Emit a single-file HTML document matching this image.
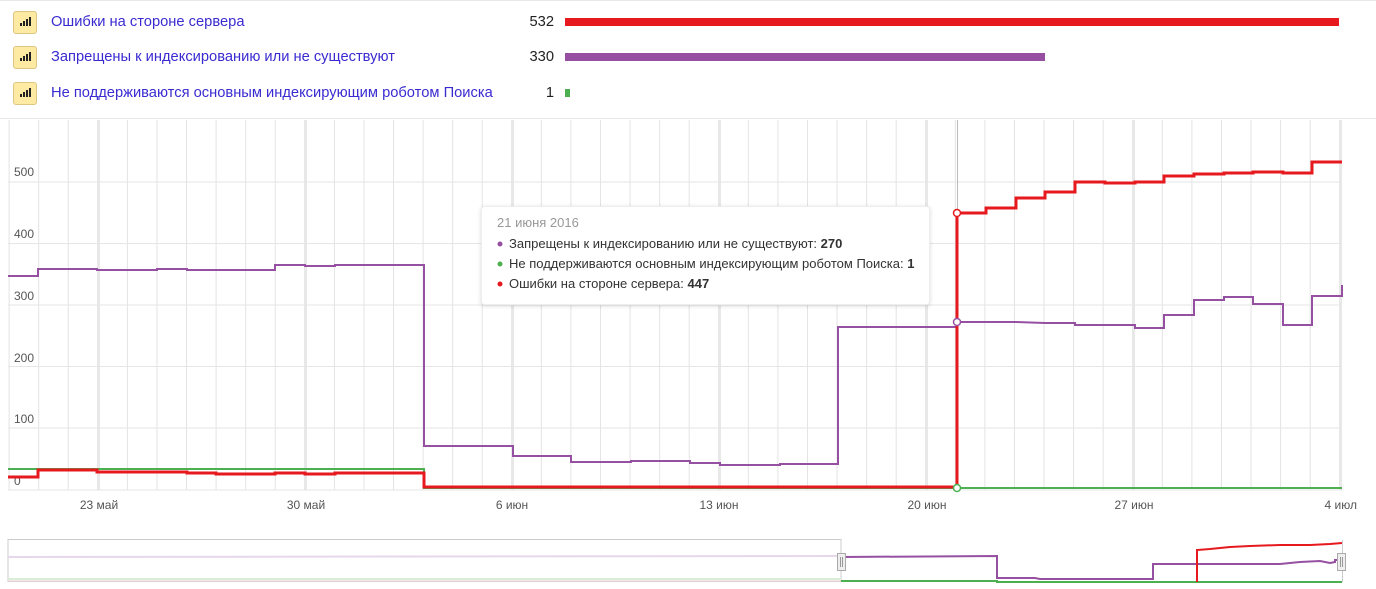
<!DOCTYPE html>
<html><head><meta charset="utf-8"><style>
body{margin:0;width:1376px;height:589px;background:#fff;font-family:"Liberation Sans",Arial,sans-serif;overflow:hidden;position:relative}
.top{position:absolute;left:0;top:0;width:1376px;height:1px;background:#e8e8e8}
.row{position:absolute;left:0;height:24px;width:1376px}
.ic{position:absolute;left:13px;top:0;width:24px;height:23px;background:#feeaa3;border:1px solid #dcc682;border-radius:3px;box-sizing:border-box}
.ic i{position:absolute;bottom:7px;width:2px;background:#222}
.lbl{position:absolute;left:51px;top:3px;font-size:14.7px;color:#3a2bd1}
.num{position:absolute;right:822px;top:3px;font-size:14.7px;color:#222}
.bar{position:absolute;left:565px;top:7px;height:8px}
.sep{position:absolute;left:0;top:118px;width:1376px;height:1px;background:#e6e6e6}
</style></head><body>
<div class="top"></div>
<div class="row" style="top:11px"><div class="ic"><i style="left:6px;height:3px"></i><i style="left:9px;height:5px"></i><i style="left:12px;height:7px"></i><i style="left:15px;height:9px"></i></div><div class="lbl">Ошибки на стороне сервера</div><div class="num">532</div><div class="bar" style="width:774px;background:#e5191e"></div></div>
<div class="row" style="top:46px"><div class="ic"><i style="left:6px;height:3px"></i><i style="left:9px;height:5px"></i><i style="left:12px;height:7px"></i><i style="left:15px;height:9px"></i></div><div class="lbl">Запрещены к индексированию или не существуют</div><div class="num">330</div><div class="bar" style="width:480px;background:#9650a1"></div></div>
<div class="row" style="top:82px"><div class="ic"><i style="left:6px;height:3px"></i><i style="left:9px;height:5px"></i><i style="left:12px;height:7px"></i><i style="left:15px;height:9px"></i></div><div class="lbl">Не поддерживаются основным индексирующим роботом Поиска</div><div class="num">1</div><div class="bar" style="width:5px;background:#4caf50"></div></div>
<div class="sep"></div>
<svg width="1376" height="589" style="position:absolute;left:0;top:0" font-family="Liberation Sans, Arial, sans-serif">
<defs><pattern id="vg" x="8.6" y="0" width="29.57" height="10" patternUnits="userSpaceOnUse"><rect x="0" y="0" width="1" height="10" fill="#e3e3e3"/></pattern></defs>
<rect x="8" y="120" width="1334" height="370" fill="url(#vg)"/>
<g fill="#e8e8e8"><rect x="97" y="120" width="3" height="370"/><rect x="304" y="120" width="3" height="370"/><rect x="511" y="120" width="3" height="370"/><rect x="718" y="120" width="3" height="370"/><rect x="925" y="120" width="3" height="370"/><rect x="1132" y="120" width="3" height="370"/><rect x="1339" y="120" width="3" height="370"/></g>
<g stroke="#e6e6e6" stroke-width="1"><line x1="8" x2="1342" y1="182" y2="182"/><line x1="8" x2="1342" y1="243.5" y2="243.5"/><line x1="8" x2="1342" y1="305" y2="305"/><line x1="8" x2="1342" y1="366.5" y2="366.5"/><line x1="8" x2="1342" y1="428" y2="428"/><line x1="8" x2="1342" y1="490" y2="490"/></g>
<g font-size="12" fill="#555"><text x="14" y="176">500</text><text x="14" y="238">400</text><text x="14" y="300">300</text><text x="14" y="362">200</text><text x="14" y="423">100</text><text x="14" y="485">0</text></g>
<g font-size="12" fill="#555" text-anchor="middle"><text x="99" y="509">23 май</text><text x="306" y="509">30 май</text><text x="512" y="509">6 июн</text><text x="719" y="509">13 июн</text><text x="927" y="509">20 июн</text><text x="1134" y="509">27 июн</text><text x="1357" y="509" text-anchor="end">4 июл</text></g>
<line x1="957.5" y1="120" x2="957.5" y2="490" stroke="#bbb"/>
<polyline fill="none" stroke="#4caf50" stroke-width="2" points="8,469 424,469 424,488 1342,488"/>
<polyline fill="none" stroke="#9650a1" stroke-width="2" points="8,276 38,276 38,269 97,269 97,270 157,270 157,269 187,269 187,270 275,270 275,265 305,265 305,266 335,266 335,265 424,265 424,446 513,446 513,456 571,456 571,462 631,462 631,461 690,461 690,463 720,463 720,465 780,465 780,464 838,464 838,327 957,327 957,322 1016,322 1045,323 1075,323 1075,325 1135,325 1135,328 1164,328 1164,315 1194,315 1194,300 1224,300 1224,297 1253,297 1253,304 1283,304 1283,325 1312,325 1312,296 1342,296 1342,285"/>
<polyline fill="none" stroke="#e5191e" stroke-width="3" points="8,477 38,477 38,470 97,470 97,472 187,472 187,473 216,473 216,474 275,474 275,473 305,473 305,474 335,474 335,473 424,473 424,487 957,487 957,213 986,213 986,208 1016,208 1016,198 1045,198 1045,192 1075,192 1075,182 1105,182 1105,183 1135,183 1135,182 1164,182 1164,176 1194,176 1194,174 1224,174 1224,173 1253,173 1253,172 1283,172 1283,173 1312,173 1312,162 1342,162"/>
<circle cx="957" cy="213" r="3.5" fill="#fff" stroke="#e5191e" stroke-width="1.5"/>
<circle cx="957" cy="322" r="3.5" fill="#fff" stroke="#9650a1" stroke-width="1.5"/>
<circle cx="957" cy="488" r="3.5" fill="#fff" stroke="#4caf50" stroke-width="1.5"/>
<rect x="481.5" y="206.5" width="448" height="98" rx="3" fill="#fff" stroke="#eee" style="filter:drop-shadow(0 1px 2px rgba(0,0,0,.15))"/>
<text x="497" y="227" font-size="13" fill="#999">21 июня 2016</text>
<g font-size="13" fill="#333"><circle cx="500" cy="244" r="2.5" fill="#9650a1"/><text x="509" y="248">Запрещены к индексированию или не существуют: <tspan font-weight="bold">270</tspan></text>
<circle cx="500" cy="264" r="2.5" fill="#4caf50"/><text x="509" y="268">Не поддерживаются основным индексирующим роботом Поиска: <tspan font-weight="bold">1</tspan></text>
<circle cx="500" cy="284" r="2.5" fill="#e5191e"/><text x="509" y="288">Ошибки на стороне сервера: <tspan font-weight="bold">447</tspan></text></g>
<rect x="8" y="539.5" width="833" height="42" fill="#fff" stroke="#ccc"/>
<line x1="8" y1="557" x2="841" y2="556" stroke="#e6d8ea" stroke-width="2"/>
<line x1="8" y1="579" x2="841" y2="579" stroke="#d8ecd8" stroke-width="2"/>
<line x1="8" y1="581" x2="841" y2="581" stroke="#f6d0d0" stroke-width="1"/>
<polyline fill="none" stroke="#4caf50" stroke-width="2" points="841,581 997,581 997,582 1342,582"/>
<polyline fill="none" stroke="#9650a1" stroke-width="2" points="841,557 997,556 997,578 1035,578 1040,579 1153,579 1153,564 1280,564 1300,562 1320,561 1330,563 1335,562 1335,560 1342,560"/>
<polyline fill="none" stroke="#e5191e" stroke-width="2" points="1197,582 1197,550 1210,549 1230,547 1250,546 1280,545 1310,545 1330,544 1342,543"/>
<line x1="1342.5" y1="540" x2="1342.5" y2="582" stroke="#ccc"/>
<rect x="837.5" y="553.5" width="8" height="17" fill="#eee" stroke="#aaa"/><line x1="840.5" y1="557" x2="840.5" y2="567" stroke="#999"/><line x1="842.5" y1="557" x2="842.5" y2="567" stroke="#999"/>
<rect x="1337.5" y="553.5" width="8" height="17" fill="#eee" stroke="#aaa"/><line x1="1340.5" y1="557" x2="1340.5" y2="567" stroke="#999"/><line x1="1342.5" y1="557" x2="1342.5" y2="567" stroke="#999"/>
</svg>
</body></html>
